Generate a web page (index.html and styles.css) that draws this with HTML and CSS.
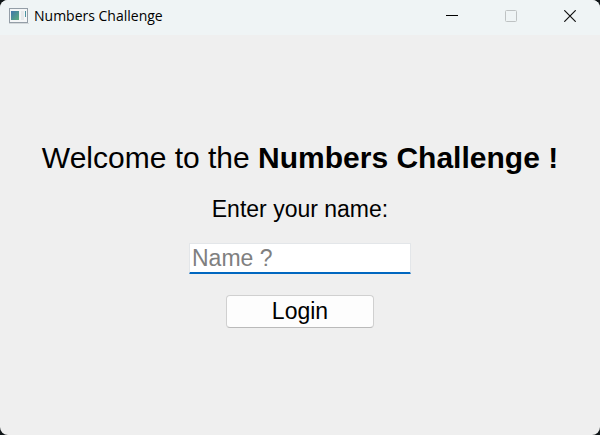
FILE: index.html
```html
<!DOCTYPE html>
<html lang="en">
<head>
<meta charset="utf-8">
<title>Numbers Challenge</title>
<link rel="stylesheet" href="styles.css">
</head>
<body>
<div class="window">
  <header class="titlebar">
    <svg class="app-icon" width="20" height="16" viewBox="0 0 20 16" aria-hidden="true">
      <defs>
        <linearGradient id="pane" x1="0" y1="0" x2="1" y2="1">
          <stop offset="0" stop-color="#3f75ad"/>
          <stop offset="1" stop-color="#5cae7c"/>
        </linearGradient>
      </defs>
      <rect x="0.5" y="0.5" width="18" height="14" fill="#f4f6f7" stroke="#949ea7"/>
      <path d="M0 15.5h20" stroke="#d3d8da"/>
      <rect x="2" y="3" width="8" height="9" fill="url(#pane)"/>
      <path d="M12 3h3v9h-3z" fill="#e6e9eb"/>
      <rect x="16" y="3" width="1" height="6" fill="#4b93a0"/>
    </svg>
    <span class="title">Numbers Challenge</span>
    <div class="controls">
      <button class="control" type="button" aria-label="Minimize">
        <svg width="12" height="12" viewBox="0 0 12 12"><path d="M0 5.5h12" stroke="#000"/></svg>
      </button>
      <button class="control" type="button" aria-label="Maximize" disabled>
        <svg width="12" height="12" viewBox="0 0 12 12"><rect x="0.5" y="0.5" width="11" height="11" rx="1" fill="none" stroke="#bec2c3"/></svg>
      </button>
      <button class="control" type="button" aria-label="Close">
        <svg width="12" height="12" viewBox="0 0 12 12"><path d="M0.3 0.3l11.4 11.4M11.7 0.3L0.3 11.7" stroke="#111" stroke-width="1.2"/></svg>
      </button>
    </div>
  </header>
  <main class="content">
    <h1 class="welcome">Welcome to the <strong>Numbers Challenge !</strong></h1>
    <form class="login">
      <label class="label" for="name">Enter your name:</label>
      <input class="field" id="name" type="text" placeholder="Name ?">
      <button class="submit" type="button">Login</button>
    </form>
  </main>
</div>
</body>
</html>
```
FILE: styles.css
```css
* {
  box-sizing: border-box;
}

body {
  margin: 0;
  background: #101618;
  color: #000;
  font-family: "Liberation Sans", Arial, sans-serif;
}

.window {
  display: flex;
  flex-direction: column;
  min-height: 100vh;
  overflow: hidden;
  border-radius: 8px;
  background: #efefef;
}

.titlebar {
  display: flex;
  align-items: center;
  height: 35px;
  padding: 0 1px 3px 9px;
  background: #eff4f5;
}

.app-icon {
  margin-right: 5px;
}

.title {
  font: 14px/20px "Open Sans", sans-serif;
}

.controls {
  display: flex;
  align-self: stretch;
  margin-left: auto;
}

.control {
  display: flex;
  align-items: center;
  justify-content: center;
  width: 59px;
  padding: 0;
  border: 0;
  background: none;
}

.content {
  display: flex;
  flex: 1;
  flex-direction: column;
  align-items: center;
  justify-content: center;
  gap: 21px;
  padding-bottom: 1px;
}

.welcome {
  margin: 0;
  font-size: 30px;
  font-weight: 400;
  line-height: 34px;
}

.login {
  display: flex;
  flex-direction: column;
  align-items: center;
  gap: 21px;
}

.label {
  font-size: 23px;
  line-height: 26px;
}

.field {
  width: 222px;
  height: 31px;
  padding: 0 2px;
  border: 1px solid #e3e6e9;
  border-bottom: 2px solid #0067c0;
  border-radius: 1px;
  outline: 0;
  background: #fff;
  font: 23px "Liberation Sans", Arial, sans-serif;
}

.field::placeholder {
  color: #808080;
}

.submit {
  width: 148px;
  height: 33px;
  padding: 0;
  border: 1px solid #d0d0d0;
  border-bottom-color: #bababa;
  border-radius: 4px;
  background: #fdfdfd;
  color: #000;
  font: 23px "Liberation Sans", Arial, sans-serif;
}
```
